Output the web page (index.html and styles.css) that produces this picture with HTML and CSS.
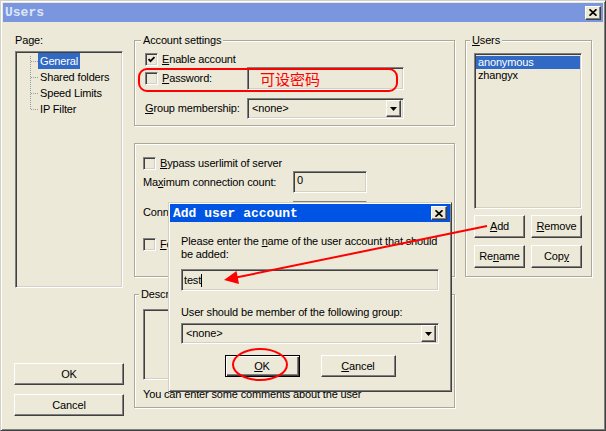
FILE: index.html
```html
<!DOCTYPE html>
<html lang="en">
<head>
    <meta charset="UTF-8">
    <title>Users</title>
    <link rel="stylesheet" href="styles.css">
</head>
<body>

<div class="window">
    <div class="titlebar">
        <span class="title">Users</span>
        <span class="close-btn">
            <svg width="8" height="7" viewBox="0 0 8 7"><path d="M0.5 0.3l7 6.4M7.5 0.3l-7 6.4" stroke="#000" stroke-width="1.7"/></svg>
        </span>
    </div>

    <div class="client">
        <!-- Page tree and main buttons -->
        <div class="col-left">
            <div class="page-label">Page:</div>
            <div class="tree sunken">
                <svg class="tree-lines" width="21" height="64">
                    <path d="M13.5 3v54M14 8.5h7M14 24.5h7M14 40.5h7M14 56.5h7" stroke="#9a9a9a" stroke-dasharray="1 1" fill="none"/>
                </svg>
                <ul class="tree-items">
                    <li><span class="selected">General</span></li>
                    <li><span>Shared folders</span></li>
                    <li><span>Speed Limits</span></li>
                    <li><span>IP Filter</span></li>
                </ul>
            </div>
            <button class="btn main-btn ok-main">OK</button>
            <button class="btn main-btn cancel-main">Cancel</button>
        </div>

        <!-- General page -->
        <div class="col-mid">
            <div class="group account">
                <div class="legend">Account settings</div>
                <div class="row enable-row">
                    <span class="check sunken">
                        <svg width="7" height="7" viewBox="0 0 7 7"><path d="M0.5 3l2 2.2L6.5 1" stroke="#000" stroke-width="1.8" fill="none"/></svg>
                    </span>
                    <span><u>E</u>nable account</span>
                </div>
                <div class="row pass-row">
                    <span class="check sunken"></span>
                    <span class="pass-label"><u>P</u>assword:</span>
                    <span class="field sunken pass-field"><span class="note">可设密码</span></span>
                </div>
                <div class="row member-row">
                    <span class="member-label"><u>G</u>roup membership:</span>
                    <span class="combo sunken member-combo">
                        <span>&lt;none&gt;</span>
                        <span class="drop-btn"><svg width="7" height="4"><polygon points="0,0 7,0 3.5,4" fill="#000"/></svg></span>
                    </span>
                </div>
            </div>

            <div class="group limits">
                <div class="row bypass-row">
                    <span class="check sunken"></span>
                    <span><u>B</u>ypass userlimit of server</span>
                </div>
                <div class="row count-row">
                    <span class="count-label">Ma<u>x</u>imum connection count:</span>
                    <span class="field sunken count-field">0</span>
                </div>
                <div class="row ip-row">
                    <span class="count-label">Connection limit per IP:</span>
                    <span class="field sunken count-field">0</span>
                </div>
                <div class="row ssl-row">
                    <span class="check sunken"></span>
                    <span><u>F</u>orce SSL for user login</span>
                </div>
            </div>

            <div class="group desc">
                <div class="legend">Description</div>
                <div class="sunken comments"></div>
                <div class="desc-note">You can enter some comments about the user</div>
            </div>
        </div>

        <!-- Users list -->
        <div class="col-right">
            <div class="group users">
                <div class="legend"><u>U</u>sers</div>
                <ul class="listbox sunken">
                    <li class="selected">anonymous</li>
                    <li>zhangyx</li>
                </ul>
                <div class="btn-row">
                    <button class="btn small-btn"><u>A</u>dd</button>
                    <button class="btn small-btn"><u>R</u>emove</button>
                </div>
                <div class="btn-row">
                    <button class="btn small-btn">Re<u>n</u>ame</button>
                    <button class="btn small-btn">Cop<u>y</u></button>
                </div>
            </div>
        </div>
    </div>

    <!-- Add user account dialog -->
    <div class="dialog">
        <div class="dialog-title">
            <span class="title">Add user account</span>
            <span class="close-btn">
                <svg width="8" height="7" viewBox="0 0 8 7"><path d="M0.5 0.3l7 6.4M7.5 0.3l-7 6.4" stroke="#000" stroke-width="1.7"/></svg>
            </span>
        </div>
        <div class="dialog-body">
            <div class="prompt">Please enter the <u>n</u>ame of the user account that should<br>be added:</div>
            <div class="field sunken name-field">test<span class="caret"></span></div>
            <div class="group-prompt">User should be member of the following group:</div>
            <div class="combo sunken dialog-combo">
                <span>&lt;none&gt;</span>
                <span class="drop-btn"><svg width="7" height="4"><polygon points="0,0 7,0 3.5,4" fill="#000"/></svg></span>
            </div>
            <div class="dialog-buttons">
                <button class="btn dlg-btn default-btn"><u>O</u>K</button>
                <button class="btn dlg-btn"><u>C</u>ancel</button>
            </div>
        </div>
    </div>

    <!-- red annotations drawn over the screenshot -->
    <svg class="marks" width="606" height="431">
        <rect x="139" y="69" width="258" height="22" rx="8" fill="none" stroke="#f00" stroke-width="2"/>
        <line x1="487" y1="226" x2="236" y2="277.5" stroke="#f00" stroke-width="2"/>
        <polygon points="224,280 239,284 236.5,271" fill="#f00"/>
        <ellipse cx="260" cy="364.5" rx="27" ry="15.5" fill="none" stroke="#f00" stroke-width="2"/>
    </svg>
</div>

</body>
</html>
```

FILE: styles.css
```css
body {
    margin: 0;
    font-family: "Liberation Sans", Arial, sans-serif;
    font-size: 11px;
    line-height: 13px;
    letter-spacing: -0.15px;
    color: #000;
    background: #ECE9D8;
}
ul {
    list-style: none;
    margin: 0;
    padding: 0;
}

/* window frame */
.window {
    position: relative;
    box-sizing: border-box;
    width: 606px;
    height: 431px;
    padding: 2px;
    background: #ECE9D8;
    border: 1px solid;
    border-color: #D4D0C8 #404040 #404040 #D4D0C8;
    box-shadow: inset 1px 1px #fff, inset -1px -1px #808080;
}
.titlebar {
    display: flex;
    align-items: center;
    justify-content: space-between;
    height: 19px;
    padding: 0 2px 0 2px;
    background: #7A96DF;
}
.title {
    font-family: "Liberation Mono", monospace;
    font-weight: bold;
    font-size: 13px;
    letter-spacing: 0;
    color: #DCE6F8;
}
.close-btn {
    box-sizing: border-box;
    display: flex;
    align-items: center;
    justify-content: center;
    width: 16px;
    height: 14px;
    background: #ECE9D8;
    border: 1px solid;
    border-color: #fff #404040 #404040 #fff;
    box-shadow: inset -1px -1px #808080;
}

/* shared controls */
.sunken {
    box-sizing: border-box;
    border: 1px solid;
    border-color: #808080 #fff #fff #808080;
    box-shadow: inset 1px 1px #404040, inset -1px -1px #D4D0C8;
    background: #ECE9D8;
}
.btn {
    display: block;
    box-sizing: border-box;
    padding: 0;
    font: inherit;
    letter-spacing: inherit;
    color: #000;
    background: #ECE9D8;
    border: 1px solid;
    border-color: #fff #404040 #404040 #fff;
    box-shadow: inset -1px -1px #808080;
}
.row {
    display: flex;
    align-items: center;
}
.check {
    display: flex;
    align-items: center;
    justify-content: center;
    flex: none;
    width: 13px;
    height: 13px;
    margin-right: 4px;
}
.field {
    flex: none;
    padding: 2px 3px;
}
.combo {
    display: flex;
    align-items: center;
    justify-content: space-between;
    padding: 2px 2px 2px 4px;
}
.drop-btn {
    box-sizing: border-box;
    display: flex;
    align-items: center;
    justify-content: center;
    width: 15px;
    height: 17px;
    border: 1px solid;
    border-color: #fff #404040 #404040 #fff;
    box-shadow: inset -1px -1px #808080;
}
.selected {
    background: #316AC5;
    color: #fff;
}

/* group boxes */
.group {
    box-sizing: border-box;
    border: 1px solid #ACA899;
    box-shadow: inset 1px 1px #fff, 1px 1px #fff;
    padding: 0 8px;
}
.legend {
    width: fit-content;
    margin: -7px 0 0 -4px;
    padding: 0 2px;
    height: 13px;
    background: #ECE9D8;
}

/* layout */
.client {
    display: grid;
    grid-template-columns: 110px 321px 127px;
    column-gap: 10px;
    align-items: start;
    padding: 12px 0 0 11px;
}

/* left column */
.page-label {
    padding-left: 1px;
}
.tree {
    display: flex;
    align-items: flex-start;
    width: 108px;
    height: 237px;
    margin: 4px 0 0 1px;
    padding: 1px;
}
.tree-lines {
    flex: none;
}
.tree-items li {
    height: 16px;
}
.tree-items span {
    display: inline-block;
    padding: 0 2px;
    line-height: 16px;
}
.main-btn {
    width: 110px;
    height: 22px;
}
.ok-main {
    margin-top: 75px;
}
.cancel-main {
    margin-top: 9px;
}

/* account settings */
.account {
    margin-top: 6px;
    height: 86px;
    padding: 0 10px;
}
.enable-row {
    margin-top: 6px;
    height: 13px;
}
.pass-row {
    margin-top: 1px;
    height: 23px;
}
.pass-label {
    width: 85px;
}
.pass-field {
    width: 157px;
    height: 23px;
    padding: 0 0 0 12px;
}
.note {
    font-family: "Noto Sans CJK SC", sans-serif;
    font-size: 15px;
    line-height: 21px;
    letter-spacing: 0;
    color: #f00;
}
.member-row {
    margin-top: 8px;
    height: 21px;
}
.member-label {
    width: 102px;
}
.member-combo {
    width: 157px;
    height: 21px;
}

/* limits */
.limits {
    margin-top: 17px;
    height: 134px;
}
.bypass-row {
    margin-top: 13px;
    height: 13px;
}
.count-row {
    margin-top: 1px;
    height: 22px;
}
.ip-row {
    margin-top: 8px;
    height: 22px;
}
.count-label {
    width: 150px;
}
.count-field {
    align-self: stretch;
    width: 74px;
}
.ssl-row {
    margin-top: 15px;
    height: 13px;
}

/* description */
.desc {
    margin-top: 17px;
    height: 114px;
}
.comments {
    width: 302px;
    height: 71px;
    margin-top: 8px;
}
.desc-note {
    margin-top: 8px;
}

/* users */
.users {
    margin-top: 6px;
    height: 237px;
}
.listbox {
    width: 108px;
    height: 156px;
    margin-top: 6px;
    padding: 2px 1px;
}
.listbox li {
    padding-left: 2px;
    height: 13px;
}
.btn-row {
    display: flex;
    gap: 6px;
    margin-top: 6px;
}
.btn-row + .btn-row {
    margin-top: 7px;
}
.small-btn {
    width: 51px;
    height: 23px;
}

/* dialog */
.dialog {
    position: absolute;
    left: 167px;
    top: 201px;
    box-sizing: border-box;
    width: 284px;
    height: 190px;
    padding: 1px;
    background: #ECE9D8;
    border: 1px solid;
    border-color: #D4D0C8 #404040 #404040 #D4D0C8;
    box-shadow: inset 1px 1px #fff, inset -1px -1px #808080;
}
.dialog-title {
    display: flex;
    align-items: center;
    justify-content: space-between;
    height: 18px;
    padding: 0 3px 0 3px;
    background: #0054E3;
}
.dialog-title .title {
    color: #fff;
}
.dialog-body {
    padding: 13px 11px 13px;
}
.prompt {
    white-space: nowrap;
}
.name-field {
    display: flex;
    align-items: center;
    height: 22px;
    margin-top: 8px;
    padding: 0 2px;
}
.caret {
    display: inline-block;
    width: 1px;
    height: 13px;
    background: #000;
}
.group-prompt {
    margin-top: 15px;
}
.dialog-combo {
    height: 21px;
    margin-top: 4px;
}
.dialog-buttons {
    display: flex;
    justify-content: center;
    gap: 21px;
    margin-top: 11px;
}
.dlg-btn {
    width: 75px;
    height: 22px;
}
.default-btn {
    border: 1px solid #000;
    box-shadow: inset 1px 1px #fff, inset -1px -1px #404040, inset -2px -2px #808080;
}

/* red annotations */
.marks {
    position: absolute;
    left: -1px;
    top: -1px;
    pointer-events: none;
}
```
